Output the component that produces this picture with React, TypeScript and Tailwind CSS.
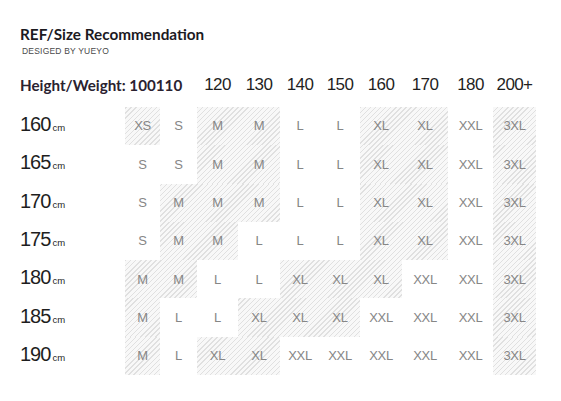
import React from "react";

const rows: { h: string; s: string[] }[] = [
  { h: "160", s: ["XS", "S", "M", "M", "L", "L", "XL", "XL", "XXL", "3XL"] },
  { h: "165", s: ["S", "S", "M", "M", "L", "L", "XL", "XL", "XXL", "3XL"] },
  { h: "170", s: ["S", "M", "M", "M", "L", "L", "XL", "XL", "XXL", "3XL"] },
  { h: "175", s: ["S", "M", "M", "L", "L", "L", "XL", "XL", "XXL", "3XL"] },
  { h: "180", s: ["M", "M", "L", "L", "XL", "XL", "XL", "XXL", "XXL", "3XL"] },
  { h: "185", s: ["M", "L", "L", "XL", "XL", "XL", "XXL", "XXL", "XXL", "3XL"] },
  { h: "190", s: ["M", "L", "XL", "XL", "XXL", "XXL", "XXL", "XXL", "XXL", "3XL"] },
];

const weights = ["120", "130", "140", "150", "160", "170", "180", "200+"];
const hatched = new Set(["XS", "M", "XL", "3XL"]);

export default function App() {
  return (
    <div className="w-[561px] h-[401px] bg-white overflow-hidden pl-5 pt-[25px] font-['Liberation_Sans',Arial,sans-serif]">
      <div className="text-[15.3px] leading-[18px] font-bold text-[#1c1a1f] font-['Lato','Liberation_Sans',sans-serif]">
        REF/Size Recommendation
      </div>
      <div className="mt-[3px] pl-[2px] text-[8.5px] leading-[10px] text-[#4a4a4a] tracking-[0.2px]">
        DESIGED BY YUEYO
      </div>
      <div className="mt-[6px] grid grid-cols-[105px_35px_37px_41px_42px_40px_40px_42px_46px_45px_43px] grid-rows-[45px_repeat(7,38.3px)]">
        <div className="col-span-3 flex items-center whitespace-nowrap text-[15.2px] leading-[18px] font-bold text-[#2a2230] font-['Lato','Liberation_Sans',sans-serif]">
          Height/Weight: 100110
        </div>
        {weights.map((w) => (
          <div
            key={w}
            className="flex items-center justify-center text-[17px] leading-[20px] text-[#1f1f1f] tracking-[-0.6px] whitespace-nowrap"
          >
            {w}
          </div>
        ))}
        {rows.map((r) => (
          <React.Fragment key={r.h}>
            <div className="flex items-center text-[#1e1e1e]">
              <div className="flex items-baseline -mt-[4px]">
                <span className="text-[20px] leading-[24px] tracking-[-1px]">{r.h}</span>
                <span className="text-[9.5px] leading-[12px] ml-[2px]">cm</span>
              </div>
            </div>
            {r.s.map((sz, i) => (
              <div
                key={i}
                className={
                  hatched.has(sz)
                    ? "flex items-center justify-center text-[13px] text-[#868686] tracking-[-0.3px] bg-fixed bg-[repeating-linear-gradient(135deg,#f8f8f8_0px,#f8f8f8_2.6px,#e0e0e0_2.6px,#e0e0e0_3.6px)]"
                    : "flex items-center justify-center text-[13px] text-[#868686] tracking-[-0.3px] bg-white"
                }
              >
                {sz}
              </div>
            ))}
          </React.Fragment>
        ))}
      </div>
    </div>
  );
}
